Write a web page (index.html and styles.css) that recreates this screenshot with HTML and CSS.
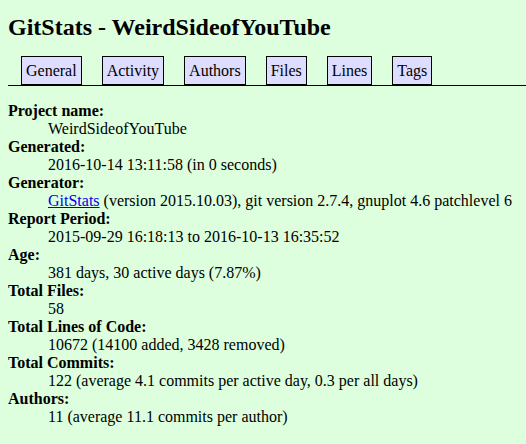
FILE: index.html
```html
<!DOCTYPE html>
<html lang="en">
<head>
<meta charset="utf-8">
<title>GitStats - WeirdSideofYouTube</title>
<link rel="stylesheet" href="styles.css">
</head>
<body>
<h1>GitStats - WeirdSideofYouTube</h1>
<nav class="nav">
<ul>
<li><a href="#general">General</a></li>
<li><a href="#activity">Activity</a></li>
<li><a href="#authors">Authors</a></li>
<li><a href="#files">Files</a></li>
<li><a href="#lines">Lines</a></li>
<li><a href="#tags">Tags</a></li>
</ul>
</nav>
<dl>
<dt>Project name:</dt><dd>WeirdSideofYouTube</dd>
<dt>Generated:</dt><dd>2016-10-14 13:11:58 (in 0 seconds)</dd>
<dt>Generator:</dt><dd><a href="#gitstats">GitStats</a> (version 2015.10.03), git version 2.7.4, gnuplot 4.6 patchlevel 6</dd>
<dt>Report Period:</dt><dd>2015-09-29 16:18:13 to 2016-10-13 16:35:52</dd>
<dt>Age:</dt><dd>381 days, 30 active days (7.87%)</dd>
<dt>Total Files:</dt><dd>58</dd>
<dt>Total Lines of Code:</dt><dd>10672 (14100 added, 3428 removed)</dd>
<dt>Total Commits:</dt><dd>122 (average 4.1 commits per active day, 0.3 per all days)</dd>
<dt>Authors:</dt><dd>11 (average 11.1 commits per author)</dd>
</dl>
</body>
</html>
```
FILE: styles.css
```css
body {
  margin: 0 0 0 8px;
  padding-top: 14px;
  color: #000;
  background: #dfd;
  font-family: "Liberation Serif", "Times New Roman", serif;
  font-size: 16px;
  line-height: 18px;
}

h1 {
  margin: 0 0 15px;
  font-size: 24px;
  line-height: 27px;
}

.nav {
  border-bottom: 1px solid #000;
}

.nav ul {
  display: flex;
  gap: 20px;
  margin: 0;
  padding: 0 13px;
  list-style: none;
}

.nav a {
  display: block;
  padding: 5px 4px 4px;
  border: 1px solid #000;
  color: #000;
  background: #ddf;
  text-decoration: none;
}

dl {
  margin: 16px 0;
}

dt {
  font-weight: bold;
}

dd {
  margin: 0 0 0 40px;
}

dd a {
  color: #00e;
}
```
